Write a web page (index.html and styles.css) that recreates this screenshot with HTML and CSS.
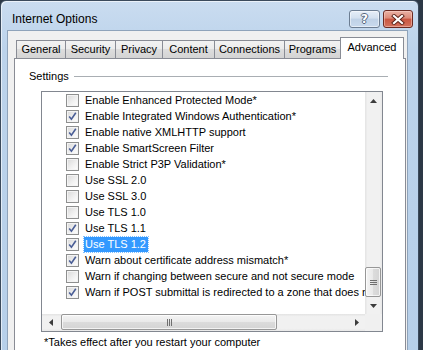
FILE: index.html
```html
<!DOCTYPE html>
<html lang="en">
<head>
    <meta charset="UTF-8">
    <title>Internet Options</title>
    <link rel="stylesheet" href="styles.css">
</head>
<body>
    <div class="window">
        <div class="titlebar">
            <span class="title">Internet Options</span>
            <div class="caption-buttons">
                <button class="cap help"><span>?</span></button>
                <button class="cap close">
                    <svg width="14" height="11" viewBox="0 0 14 11">
                        <path d="M3 2 L11 9 M11 2 L3 9" stroke="#5b2219" stroke-width="4" stroke-linecap="square"/>
                        <path d="M3 2 L11 9 M11 2 L3 9" stroke="#fff" stroke-width="2.2" stroke-linecap="square"/>
                    </svg>
                </button>
            </div>
        </div>

        <div class="client">
            <div class="tabs">
                <div class="tab general">General</div>
                <div class="tab security">Security</div>
                <div class="tab privacy">Privacy</div>
                <div class="tab content">Content</div>
                <div class="tab connections">Connections</div>
                <div class="tab programs">Programs</div>
                <div class="tab advanced active">Advanced</div>
            </div>

            <div class="panel">
                <div class="group-label">
                    <span>Settings</span>
                    <div class="rule"></div>
                </div>

                <div class="listbox">
                    <div class="list-main">
                        <div class="items">
                            <div class="item"><span class="check"></span><span class="label">Enable Enhanced Protected Mode*</span></div>
                            <div class="item"><span class="check"><svg width="11" height="11" viewBox="0 0 11 11"><path d="M2.2 5.6 L4.4 8.2 L8.8 1.8" fill="none" stroke="#4a5e96" stroke-width="1.6"/></svg></span><span class="label">Enable Integrated Windows Authentication*</span></div>
                            <div class="item"><span class="check"><svg width="11" height="11" viewBox="0 0 11 11"><path d="M2.2 5.6 L4.4 8.2 L8.8 1.8" fill="none" stroke="#4a5e96" stroke-width="1.6"/></svg></span><span class="label">Enable native XMLHTTP support</span></div>
                            <div class="item"><span class="check"><svg width="11" height="11" viewBox="0 0 11 11"><path d="M2.2 5.6 L4.4 8.2 L8.8 1.8" fill="none" stroke="#4a5e96" stroke-width="1.6"/></svg></span><span class="label">Enable SmartScreen Filter</span></div>
                            <div class="item"><span class="check"></span><span class="label">Enable Strict P3P Validation*</span></div>
                            <div class="item"><span class="check"></span><span class="label">Use SSL 2.0</span></div>
                            <div class="item"><span class="check"></span><span class="label">Use SSL 3.0</span></div>
                            <div class="item"><span class="check"></span><span class="label">Use TLS 1.0</span></div>
                            <div class="item"><span class="check"><svg width="11" height="11" viewBox="0 0 11 11"><path d="M2.2 5.6 L4.4 8.2 L8.8 1.8" fill="none" stroke="#4a5e96" stroke-width="1.6"/></svg></span><span class="label">Use TLS 1.1</span></div>
                            <div class="item"><span class="check"><svg width="11" height="11" viewBox="0 0 11 11"><path d="M2.2 5.6 L4.4 8.2 L8.8 1.8" fill="none" stroke="#4a5e96" stroke-width="1.6"/></svg></span><span class="label selected">Use TLS 1.2</span></div>
                            <div class="item"><span class="check"><svg width="11" height="11" viewBox="0 0 11 11"><path d="M2.2 5.6 L4.4 8.2 L8.8 1.8" fill="none" stroke="#4a5e96" stroke-width="1.6"/></svg></span><span class="label">Warn about certificate address mismatch*</span></div>
                            <div class="item"><span class="check"></span><span class="label">Warn if changing between secure and not secure mode</span></div>
                            <div class="item"><span class="check"><svg width="11" height="11" viewBox="0 0 11 11"><path d="M2.2 5.6 L4.4 8.2 L8.8 1.8" fill="none" stroke="#4a5e96" stroke-width="1.6"/></svg></span><span class="label">Warn if POST submittal is redirected to a zone that does not permit posts</span></div>
                        </div>

                        <div class="vscroll">
                            <div class="sb-btn">
                                <svg width="7" height="4" viewBox="0 0 7 4"><path d="M0 4 L3.5 0 L7 4 Z" fill="#3c3c3c"/></svg>
                            </div>
                            <div class="vthumb">
                                <svg width="7" height="7" viewBox="0 0 7 7"><path d="M0 1.5 H7 M0 3.5 H7 M0 5.5 H7" stroke="#6f6f6f" stroke-width="1"/></svg>
                            </div>
                            <div class="sb-btn">
                                <svg width="7" height="4" viewBox="0 0 7 4"><path d="M0 0 L3.5 4 L7 0 Z" fill="#3c3c3c"/></svg>
                            </div>
                        </div>
                    </div>

                    <div class="hscroll">
                        <div class="sb-btn">
                            <svg width="4" height="7" viewBox="0 0 4 7"><path d="M4 0 L0 3.5 L4 7 Z" fill="#3c3c3c"/></svg>
                        </div>
                        <div class="htrack">
                            <div class="hthumb">
                                <svg width="7" height="7" viewBox="0 0 7 7"><path d="M1.5 0 V7 M3.5 0 V7 M5.5 0 V7" stroke="#6f6f6f" stroke-width="1"/></svg>
                            </div>
                        </div>
                        <div class="sb-btn">
                            <svg width="4" height="7" viewBox="0 0 4 7"><path d="M0 0 L4 3.5 L0 7 Z" fill="#3c3c3c"/></svg>
                        </div>
                        <div class="corner"></div>
                    </div>
                </div>

                <p class="note">*Takes effect after you restart your computer</p>
            </div>
        </div>
    </div>
</body>
</html>
```

FILE: styles.css
```css
* {
    margin: 0;
    padding: 0;
    box-sizing: border-box;
}

body {
    background: #2c3846;
    font-family: 'Liberation Sans', sans-serif;
    font-size: 11px;
    color: #000;
    overflow: hidden;
}

.window {
    width: 419px;
    height: 400px;
    border: 1px solid #3b4a5c;
    border-radius: 6px 6px 0 0;
    background: linear-gradient(180deg, #cadcf0 0%, #bcd3eb 12%, #b6cfe9 100%);
    box-shadow: inset 1px 1px 0 rgba(255, 255, 255, 0.6);
}

/* title bar */
.titlebar {
    height: 29px;
    display: flex;
    justify-content: space-between;
    align-items: flex-start;
    padding: 9px 5px 0 11px;
}

.title {
    font-size: 12px;
    line-height: 18px;
    color: #000;
}

.caption-buttons {
    display: flex;
    gap: 3px;
}

.cap {
    height: 18px;
    border-radius: 3px;
    display: flex;
    align-items: center;
    justify-content: center;
}

.cap.help {
    width: 31px;
    border: 1px solid #6c7d92;
    background: linear-gradient(180deg, #e6eef8 0%, #d3e0ef 45%, #bfd1e6 50%, #c9daee 100%);
    box-shadow: inset 0 0 0 1px rgba(255, 255, 255, 0.5);
}

.cap.help span {
    font-family: 'DejaVu Sans', sans-serif;
    font-weight: bold;
    font-size: 12px;
    line-height: 12px;
    color: #fff;
    text-shadow: 1px 0 0 #55667c, -1px 0 0 #55667c, 0 1px 0 #55667c, 0 -1px 0 #55667c;
}

.cap.close {
    width: 30px;
    border: 1px solid #6b2a22;
    background: linear-gradient(180deg, #eab2a5 0%, #dd8a78 45%, #c95540 50%, #d3715d 100%);
    box-shadow: inset 0 0 0 1px rgba(255, 220, 210, 0.45);
}

/* client area */
.client {
    margin-left: 6px;
    width: 401px;
    height: 370px;
    background: #f0f0f0;
    border: 1px solid #8fa3ba;
    padding: 6px 1px 0 6px;
}

.tabs {
    display: flex;
    align-items: flex-end;
    padding-left: 2px;
    height: 21px;
    position: relative;
    z-index: 1;
}

.tab {
    height: 18px;
    line-height: 16px;
    text-align: center;
    border: 1px solid #898c95;
    border-bottom: none;
    margin-right: -1px;
    background: linear-gradient(180deg, #f2f2f2 0%, #ebebeb 50%, #dddddd 50%, #d4d4d4 100%);
    color: #000;
}

.tab.general { width: 50px; }
.tab.security { width: 51px; }
.tab.privacy { width: 48px; }
.tab.content { width: 53px; }
.tab.connections { width: 71px; }
.tab.programs { width: 57px; }
.tab.advanced { width: 64px; }

.tab.active {
    height: 22px;
    line-height: 18px;
    margin-bottom: -1px;
    background: #fff;
}

.panel {
    height: 330px;
    border: 1px solid #898c95;
    background: #fff;
    padding: 10px 17px 0 14px;
}

.group-label {
    display: flex;
    align-items: center;
    gap: 5px;
    line-height: 14px;
}

.group-label .rule {
    flex: 1;
    height: 1px;
    background: #a9aeb3;
}

/* list box */
.listbox {
    margin: 8px 0 0 12px;
    width: 342px;
    height: 241px;
    border: 1px solid #828790;
    display: flex;
    flex-direction: column;
}

.list-main {
    flex: 1;
    display: flex;
    min-height: 0;
}

.items {
    flex: 1;
    overflow: hidden;
}

.item {
    height: 16px;
    display: flex;
    align-items: center;
    padding-left: 24px;
    white-space: nowrap;
}

.check {
    flex: none;
    width: 13px;
    height: 13px;
    border: 1px solid #8e8f8f;
    background: linear-gradient(135deg, #d8d8d8 0%, #f2f2f2 60%, #ffffff 100%);
    box-shadow: inset 0 0 0 1px #f4f4f4;
}

.check svg {
    display: block;
}

.label {
    margin-left: 5px;
    padding: 0 2px 0 1px;
    line-height: 15px;
}

.label.selected {
    background: #3399ff;
    color: #fff;
    outline: 1px dotted #7fbfff;
}

/* scroll bars */
.vscroll {
    width: 17px;
    display: flex;
    flex-direction: column;
    justify-content: space-between;
    background: linear-gradient(90deg, #e3e3e3 0%, #f1f1f1 15%, #f1f1f1 85%, #e8e8e8 100%);
}

.sb-btn {
    width: 17px;
    height: 17px;
    flex: none;
    display: flex;
    align-items: center;
    justify-content: center;
}

.vthumb {
    margin-top: auto;
    width: 16px;
    height: 30px;
    border: 1px solid #979797;
    border-radius: 2px;
    background: linear-gradient(90deg, #f4f4f4 0%, #e9e9e9 50%, #dcdcdc 50%, #d4d4d4 100%);
    box-shadow: inset 0 0 0 1px rgba(255, 255, 255, 0.7);
    display: flex;
    align-items: center;
    justify-content: center;
}

.hscroll {
    height: 17px;
    display: flex;
    background: linear-gradient(180deg, #e3e3e3 0%, #f1f1f1 15%, #f1f1f1 85%, #e8e8e8 100%);
}

.htrack {
    flex: 1;
    padding-left: 2px;
}

.hthumb {
    width: 216px;
    height: 16px;
    border: 1px solid #979797;
    border-radius: 2px;
    background: linear-gradient(180deg, #f4f4f4 0%, #e9e9e9 50%, #dcdcdc 50%, #d4d4d4 100%);
    box-shadow: inset 0 0 0 1px rgba(255, 255, 255, 0.7);
    display: flex;
    align-items: center;
    justify-content: center;
}

.corner {
    width: 17px;
    background: #f0f0f0;
}

.note {
    margin: 3px 0 0 15px;
    line-height: 14px;
}
```
